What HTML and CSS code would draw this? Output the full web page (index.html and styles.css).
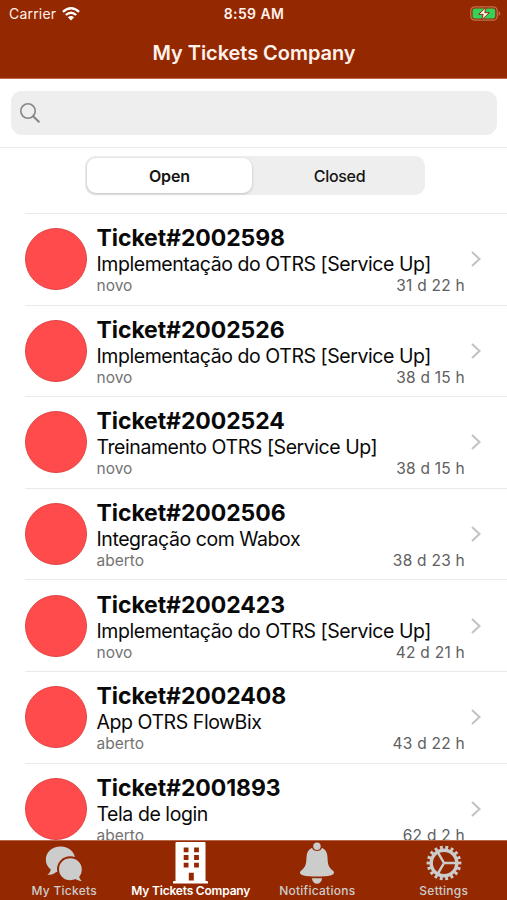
FILE: index.html
```html
<!DOCTYPE html>
<html lang="en">
<head>
<meta charset="utf-8">
<title>My Tickets Company</title>
<link rel="stylesheet" href="styles.css">
</head>
<body>
<div class="app">
  <header class="header">
    <div class="status">
      <div class="carrier"><span>Carrier</span>
        <svg class="wifi" viewBox="0 0 18 14"><g fill="none" stroke="#fff" stroke-width="2.3"><path d="M.9 4.9Q9-2.4 17.1 4.9"/><path d="M3.8 8Q9 3.4 14.2 8"/></g><path d="M5.9 10.2Q9 7.6 12.1 10.2L9 13.5Z" fill="#fff"/></svg>
      </div>
      <time class="clock">8:59 AM</time>
      <svg class="battery" viewBox="0 0 31 15"><rect x=".8" y=".8" width="26.4" height="13.4" rx="4" fill="none" stroke="#c2704f" stroke-width="1.3"/><rect x="2.6" y="2.6" width="22.6" height="9.8" rx="2" fill="#35d158"/><path d="M28.6 5q1.7.7 1.7 2.5t-1.7 2.5Z" fill="#c2704f"/><path d="M16.2 1.3 8.6 8.3h4.6l-1.6 5.6 7.8-7.2h-4.7Z" fill="#fff" stroke="#942800" stroke-width="1"/></svg>
    </div>
    <h1 class="title">My Tickets Company</h1>
  </header>
  <div class="search">
    <label class="field"><svg class="lens" viewBox="0 0 20 20" fill="none" stroke="#858585" stroke-linecap="round"><circle cx="8" cy="8" r="7.2" stroke-width="1.6"/><path d="m13.2 13.2 5.6 5.6" stroke-width="2"/></svg></label>
  </div>
  <main class="content">
    <div class="segments"><button class="segment selected">Open</button><button class="segment">Closed</button></div>
    <ul class="tickets">
      <li class="ticket"><span class="dot"></span><div class="info"><h2>Ticket#2002598</h2><p>Implementação do OTRS [Service Up]</p><div class="meta"><span>novo</span><span class="age">31 d 22 h</span></div></div><svg class="chevron" viewBox="0 0 10 16"><path d="m1 1 7.5 7L1 15"/></svg></li>
      <li class="ticket"><span class="dot"></span><div class="info"><h2>Ticket#2002526</h2><p>Implementação do OTRS [Service Up]</p><div class="meta"><span>novo</span><span class="age">38 d 15 h</span></div></div><svg class="chevron" viewBox="0 0 10 16"><path d="m1 1 7.5 7L1 15"/></svg></li>
      <li class="ticket"><span class="dot"></span><div class="info"><h2>Ticket#2002524</h2><p>Treinamento OTRS [Service Up]</p><div class="meta"><span>novo</span><span class="age">38 d 15 h</span></div></div><svg class="chevron" viewBox="0 0 10 16"><path d="m1 1 7.5 7L1 15"/></svg></li>
      <li class="ticket"><span class="dot"></span><div class="info"><h2>Ticket#2002506</h2><p>Integração com Wabox</p><div class="meta"><span>aberto</span><span class="age">38 d 23 h</span></div></div><svg class="chevron" viewBox="0 0 10 16"><path d="m1 1 7.5 7L1 15"/></svg></li>
      <li class="ticket"><span class="dot"></span><div class="info"><h2>Ticket#2002423</h2><p>Implementação do OTRS [Service Up]</p><div class="meta"><span>novo</span><span class="age">42 d 21 h</span></div></div><svg class="chevron" viewBox="0 0 10 16"><path d="m1 1 7.5 7L1 15"/></svg></li>
      <li class="ticket"><span class="dot"></span><div class="info"><h2>Ticket#2002408</h2><p>App OTRS FlowBix</p><div class="meta"><span>aberto</span><span class="age">43 d 22 h</span></div></div><svg class="chevron" viewBox="0 0 10 16"><path d="m1 1 7.5 7L1 15"/></svg></li>
      <li class="ticket"><span class="dot"></span><div class="info"><h2>Ticket#2001893</h2><p>Tela de login</p><div class="meta"><span>aberto</span><span class="age">62 d 2 h</span></div></div><svg class="chevron" viewBox="0 0 10 16"><path d="m1 1 7.5 7L1 15"/></svg></li>
    </ul>
  </main>
  <nav class="tabs">
    <a class="tab"><svg viewBox="0 0 40 44"><path d="M16.500 5.500C8 5.500 1.800 11.200 1.800 18.700c0 4.200 2 7.500 4.900 9.700-.3 2.400-1.500 4-3.400 5.400 3.700.1 6.700-1 9-2.900 1.300.3 2.700.5 4.200.5 8.500 0 14.700-5.200 14.700-12.700S25 5.500 16.500 5.500Z"/><path class="front-bubble" d="M26.300 17.200c-6.300 0-11.300 4.700-11.300 11s5 11 11.300 11c1.800 0 3.700-.4 5.200-1.100 1.800 1.300 3.900 2 6.300 1.800-1.500-1.200-2.300-2.500-2.600-4.200 1.600-1.900 2.600-4.500 2.600-7.500 0-6.300-5.200-11-11.500-11Z"/></svg><span>My Tickets</span></a>
    <a class="tab active"><svg viewBox="0 0 40 44"><path fill-rule="evenodd" d="M4.500 2q0-1 1-1h28q1 0 1 1v38h1.500q1 0 1 1v1.500h-35v-1.500q0-1 1-1h1.500ZM12.700 6.500v4.800h4.800v-4.800ZM23.100 6.500v4.800h4.800v-4.800ZM12.700 14.100v4.800h4.800v-4.800ZM23.100 14.100v4.800h4.800v-4.800ZM12.700 21.700v4.800h4.800v-4.800ZM23.100 21.700v4.800h4.800v-4.800ZM17.800 31.800V39.500h5v-7.700Z"/></svg><span>My Tickets Company</span></a>
    <a class="tab"><svg viewBox="0 0 40 44"><circle cx="20" cy="5.200" r="3.700"/><path d="M15.100 6.700C11.600 8.400 9.600 11.500 9.500 16 9.300 24.300 8 26.500 4.200 29.500c-2.100 1.700-1.300 4 1.600 4.700 4 1 9 1.400 14.200 1.400s10.200-.4 14.200-1.400c2.900-.7 3.700-3 1.600-4.700C32 26.500 30.700 24.300 30.500 16 30.400 11.500 28.400 8.400 24.900 6.700 24 11.100 16 11.100 15.100 6.700Z"/><path d="M14.900 37.200h10.200C24.600 40.800 22.600 42.700 20 42.700s-4.600-1.900-5.100-5.500Z"/></svg><span>Notifications</span></a>
    <a class="tab"><svg viewBox="0 0 40 44"><g fill="none" stroke="#ccc"><circle cx="20" cy="22" r="12.800" stroke-width="3.400"/><circle cx="20" cy="22" r="15.600" stroke-width="3.600" pathLength="36" stroke-dasharray="1.050 .95" stroke-dashoffset=".5"/><path d="M20 22h12M20 22l-6-10.400M20 22l-6 10.400" stroke-width="2.500"/></g></svg><span>Settings</span></a>
  </nav>
</div>
</body>
</html>
```
FILE: styles.css
```css
* { box-sizing: border-box; margin: 0; padding: 0; }
body { font-family: Inter, "Liberation Sans", sans-serif; background: #fff; color: #090909; overflow: hidden; }
.app { display: flex; flex-direction: column; height: 900px; width: 507px; }
.header { flex: none; height: 79px; background: #942800; color: #fff2ec; border-bottom: 1px solid #c16745; }
.status { display: grid; grid-template-columns: 1fr auto 1fr; align-items: center; height: 27px; padding: 0 6px 0 9px; font-size: 14px; line-height: 27px; }
.carrier { display: flex; align-items: center; gap: 6px; letter-spacing: .2px; }
.wifi { width: 18px; height: 14px; }
.clock { font-weight: 600; letter-spacing: .4px; margin-left: -2px; }
.battery { width: 31px; height: 15px; justify-self: end; }
.title { padding-left: 1px; font-size: 20px; font-weight: 600; line-height: 52px; text-align: center; letter-spacing: -.05px; }
.search { flex: none; height: 69px; padding: 12px 10px 12px 11px; border-bottom: 1px solid #e9e9e9; }
.field { display: flex; align-items: center; height: 44px; padding-left: 9px; background: #eee; border-radius: 11px; }
.lens { width: 20px; height: 20px; }
.content { flex: 1; min-height: 0; overflow: hidden; padding-top: 8px; }
.segments { display: flex; width: 340px; height: 39px; margin: 0 auto 18px 85px; padding: 2px; background: #eee; border-radius: 10px; }
.segment { flex: 1; border: 0; padding-left: 4px; background: none; font: 500 16px/34px Inter, sans-serif; letter-spacing: -.3px; color: #151515; border-radius: 9px; }
.selected { background: #fff; padding-left: 0; letter-spacing: -.1px; font-weight: 600; flex: 0 0 165px; box-shadow: 0 1px 3px #0003; }
.tickets { list-style: none; margin-left: 25px; border-top: 1px solid #e9e9e9; }
.ticket { display: flex; align-items: center; height: 91.600px; padding-right: 26px; border-bottom: 1px solid #e9e9e9; }
.dot { flex: none; width: 62px; height: 62px; border-radius: 50%; background: #ff4b4b; border: 1px solid #df4848; }
.info { flex: 1; height: 70px; margin-left: 9.500px; white-space: nowrap; }
.info h2 { font-size: 23px; line-height: 28px; font-weight: 700; letter-spacing: -.08px; }
.info p { font-size: 19.500px; line-height: 25px; letter-spacing: -.44px; }
.meta { display: flex; justify-content: space-between; font-size: 15.500px; line-height: 18px; color: #737373; }
.age { color: #606060; margin-right: 6px; letter-spacing: .25px; }
.chevron { flex: none; width: 10px; height: 16px; fill: none; stroke: #c2c2c2; stroke-width: 2; }
.tabs { flex: none; display: grid; grid-template-columns: repeat(4, 1fr); height: 60px; padding-left: 1px; background: #942800; border-top: 1px solid #b86649; }
.tab { display: flex; flex-direction: column; align-items: center; color: #ccc; font-size: 12px; font-weight: 500; line-height: 16px; letter-spacing: .25px; white-space: nowrap; }
.tab svg { width: 40px; height: 44px; margin-bottom: -2px; fill: currentColor; flex: none; }
.front-bubble { stroke: #942800; stroke-width: 4; paint-order: stroke; }
.active { color: #fff; font-weight: 600; letter-spacing: -.2px; }
```
